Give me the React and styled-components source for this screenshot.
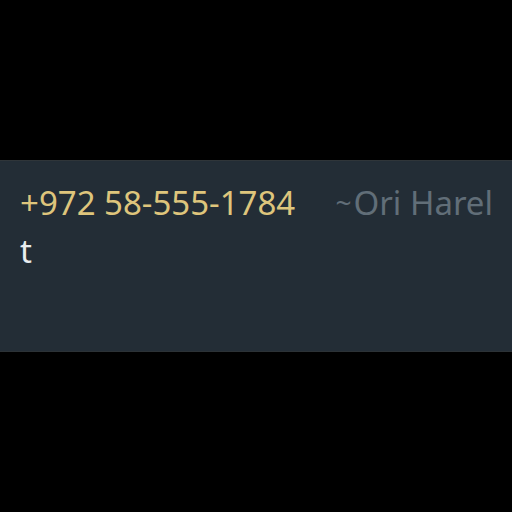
import React from "react";
import styled, { createGlobalStyle } from "styled-components";

const GlobalStyle = createGlobalStyle`
  html, body {
    margin: 0;
    padding: 0;
    background: #000000;
  }
`;

const Screen = styled.div`
  display: flex;
  align-items: center;
  height: 100vh;
  width: 100vw;
  font-family: "Noto Sans", "Open Sans", sans-serif;
`;

const Bubble = styled.div`
  box-sizing: border-box;
  width: 100%;
  height: 192px;
  background: #232d36;
  border-top: 1px solid #2f3539;
  border-bottom: 1px solid #2c3236;
  padding: 19px 19px 0 20px;
`;

const Header = styled.div`
  display: flex;
  justify-content: space-between;
  align-items: baseline;
  font-size: 33px;
  line-height: 45px;
`;

const Phone = styled.span`
  color: #dec57c;
`;

const PushName = styled.span`
  color: #616e78;
`;

const Tilde = styled.span`
  font-size: 28px;
  vertical-align: 2px;
  margin-right: 2px;
`;

const Body = styled.div`
  margin-top: 3px;
  font-size: 33px;
  line-height: 45px;
  color: #e9edef;
`;

export default function App() {
  return (
    <>
      <GlobalStyle />
      <Screen>
        <Bubble>
          <Header>
            <Phone>+972 58-555-1784</Phone>
            <PushName>
              <Tilde>~</Tilde>Ori Harel
            </PushName>
          </Header>
          <Body>t</Body>
        </Bubble>
      </Screen>
    </>
  );
}
